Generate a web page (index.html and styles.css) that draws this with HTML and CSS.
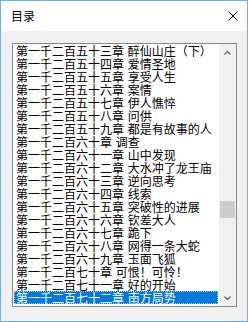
FILE: index.html
```html
<!DOCTYPE html>
<html lang="zh">
<head>
    <meta charset="UTF-8" />
    <title>目录</title>
    <link rel="stylesheet" href="styles.css">
</head>
<body>
    <div class="window">
        <div class="titlebar">
            <span class="title">目录</span>
            <svg class="close" width="10" height="10" viewBox="0 0 10 10">
                <path d="M0.5 0.5 L9.5 9.5 M9.5 0.5 L0.5 9.5" stroke="#000" stroke-width="1" fill="none"/>
            </svg>
        </div>

        <div class="client">
            <div class="listbox">
                <ul class="items">
                    <li>第一千二百五十三章 醉仙山庄（下）</li>
                    <li>第一千二百五十四章 爱情圣地</li>
                    <li>第一千二百五十五章 享受人生</li>
                    <li>第一千二百五十六章 案情</li>
                    <li>第一千二百五十七章 伊人憔悴</li>
                    <li>第一千二百五十八章 问供</li>
                    <li>第一千二百五十九章 都是有故事的人</li>
                    <li>第一千二百六十章 调查</li>
                    <li>第一千二百六十一章 山中发现</li>
                    <li>第一千二百六十二章 大水冲了龙王庙</li>
                    <li>第一千二百六十三章 逆向思考</li>
                    <li>第一千二百六十四章 线索</li>
                    <li>第一千二百六十五章 突破性的进展</li>
                    <li>第一千二百六十六章 钦差大人</li>
                    <li>第一千二百六十七章 跪下</li>
                    <li>第一千二百六十八章 网得一条大蛇</li>
                    <li>第一千二百六十九章 玉面飞狐</li>
                    <li>第一千二百七十章 可恨！可怜！</li>
                    <li>第一千二百七十一章 好的开始</li>
                    <li class="selected">第一千二百七十二章 南方局势</li>
                </ul>

                <div class="scrollbar">
                    <div class="arrow">
                        <svg width="7" height="4" viewBox="0 0 7 4">
                            <path d="M0.5 3.5 L3.5 0.5 L6.5 3.5" stroke="#606060" stroke-width="1.2" fill="none"/>
                        </svg>
                    </div>
                    <div class="track">
                        <div class="thumb"></div>
                    </div>
                    <div class="arrow">
                        <svg width="7" height="4" viewBox="0 0 7 4">
                            <path d="M0.5 0.5 L3.5 3.5 L6.5 0.5" stroke="#606060" stroke-width="1.2" fill="none"/>
                        </svg>
                    </div>
                </div>
            </div>
        </div>
    </div>
</body>
</html>
```

FILE: styles.css
```css
body {
    margin: 0;
    padding: 0;
    background: #ffffff;
    font-family: 'Noto Sans CJK SC', 'Noto Sans', sans-serif;
    color: #000;
}

.window {
    width: 248px;
    height: 322px;
    box-sizing: border-box;
    border: 1px solid #6cb0dc;
    display: flex;
    flex-direction: column;
    background: #f0f0f0;
}

/* Titelleiste */
.titlebar {
    height: 30px;
    flex-shrink: 0;
    background: #ffffff;
    display: flex;
    align-items: center;
    justify-content: space-between;
    padding: 0 9px 0 10px;
}

.title {
    font-size: 12px;
    line-height: 14px;
    margin-top: -1px;
}

.close {
    display: block;
    margin-top: -1px;
}

.client {
    flex: 1;
    padding: 12px 0 0 11px;
}

/* Listbox */
.listbox {
    width: 225px;
    height: 264px;
    box-sizing: border-box;
    border: 1px solid #828790;
    background: #ffffff;
    display: flex;
}

.items {
    list-style: none;
    margin: 0;
    padding: 0 0 0 1px;
    width: 205px;
    overflow: hidden;
}

.items li {
    height: 13px;
    line-height: 13px;
    font-size: 12px;
    padding-left: 2px;
    white-space: nowrap;
    word-spacing: 1px;
}

.items li.selected {
    background: #0078d7;
    color: #ffffff;
    outline: 1px dotted #9cc8f0;
    outline-offset: -1px;
}

/* Scrollbar */
.scrollbar {
    width: 17px;
    margin-left: 1px;
    background: #f0f0f0;
    display: flex;
    flex-direction: column;
}

.arrow {
    height: 17px;
    flex-shrink: 0;
    display: flex;
    align-items: center;
    justify-content: center;
}

.arrow svg {
    display: block;
}

.track {
    flex: 1;
    padding-top: 140px;
    box-sizing: border-box;
}

.thumb {
    width: 15px;
    height: 17px;
    margin-left: 1px;
    background: #cdcdcd;
}
```
